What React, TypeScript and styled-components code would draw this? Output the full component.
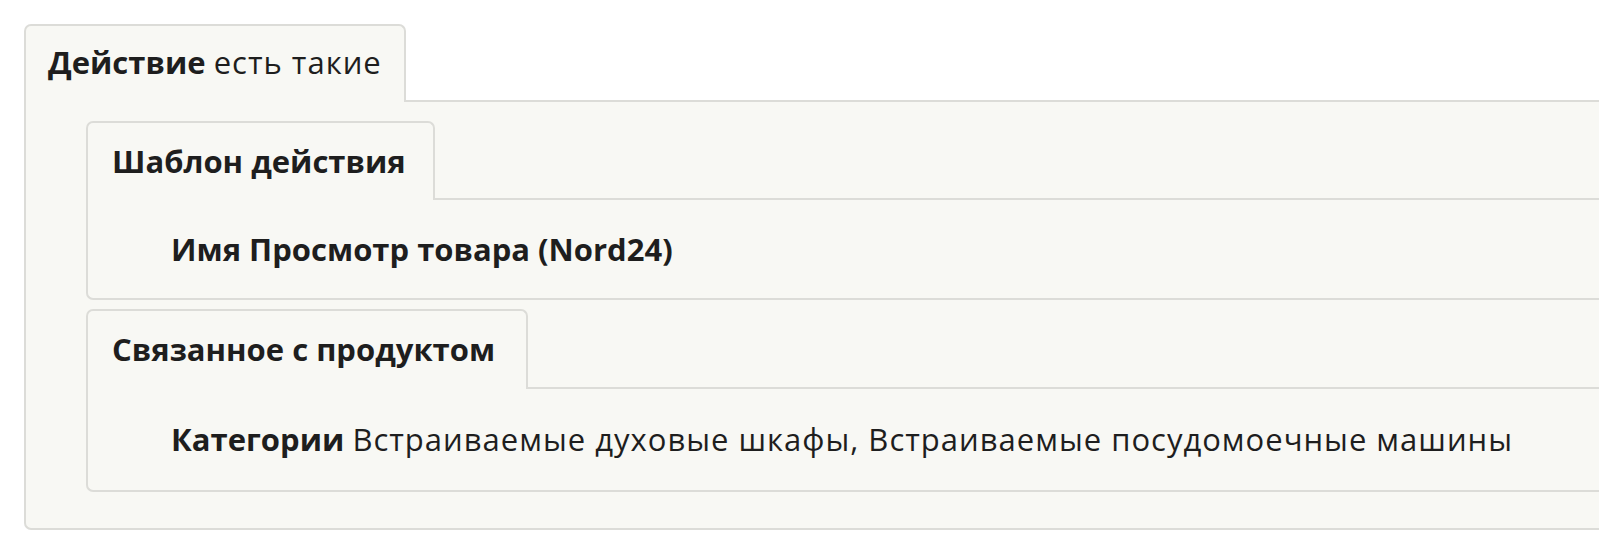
import React from 'react'
import styled, { createGlobalStyle } from 'styled-components'

const GlobalStyle = createGlobalStyle`
  html, body {
    margin: 0;
    padding: 0;
    background: #ffffff;
    overflow: hidden;
  }
  body {
    font-family: 'Open Sans', 'Noto Sans', sans-serif;
    color: #1e1e1e;
  }
`

const Page = styled.div`
  padding: 24px 0 0 24px;
  width: 1800px;
`

/* fieldset-like block: tab on top, body below */
const Group = styled.section`
  display: flex;
  flex-direction: column;
`

const Tab = styled.div<{ $height: number; $pad: string }>`
  align-self: flex-start;
  height: ${p => p.$height}px;
  box-sizing: border-box;
  display: flex;
  align-items: center;
  padding: ${p => p.$pad};
  background: #f8f8f4;
  border: 2px solid #dcdcd8;
  border-bottom: none;
  border-radius: 7px 7px 0 0;
  font-size: 31px;
  white-space: nowrap;
  position: relative;
  z-index: 1;
  margin-bottom: -2px;
`

const Body = styled.div<{ $pad: string }>`
  background: #f8f8f4;
  border: 2px solid #dcdcd8;
  border-right: none;
  border-radius: 0 0 0 7px;
  padding: ${p => p.$pad};
`

const Bold = styled.b`
  font-weight: 700;
`

const Plain = styled.span`
  letter-spacing: 1px;
`

const Row = styled.div`
  font-size: 31px;
  line-height: 31px;
  white-space: nowrap;
`

const Stack = styled.div`
  display: flex;
  flex-direction: column;
  gap: 9px;
`

export default function App() {
  return (
    <>
      <GlobalStyle />
      <Page>
        <Group>
          <Tab $height={78} $pad="0 22px 4px 22px">
            <Bold>Действие</Bold>&nbsp;<Plain>есть такие</Plain>
          </Tab>
          <Body $pad="19px 0 36px 60px">
            <Stack>
              <Group>
                <Tab $height={79} $pad="0 27px 2px 24px">
                  <Bold>Шаблон действия</Bold>
                </Tab>
                <Body $pad="34px 0 33px 83px">
                  <Row>
                    <Bold>Имя Просмотр товара (Nord24)</Bold>
                  </Row>
                </Body>
              </Group>
              <Group>
                <Tab $height={80} $pad="0 31px 2px 24px">
                  <Bold>Связанное с продуктом</Bold>
                </Tab>
                <Body $pad="35px 0 35px 83px">
                  <Row>
                    <Bold>Категории</Bold> <Plain>Встраиваемые духовые шкафы, Встраиваемые посудомоечные машины</Plain>
                  </Row>
                </Body>
              </Group>
            </Stack>
          </Body>
        </Group>
      </Page>
    </>
  )
}
